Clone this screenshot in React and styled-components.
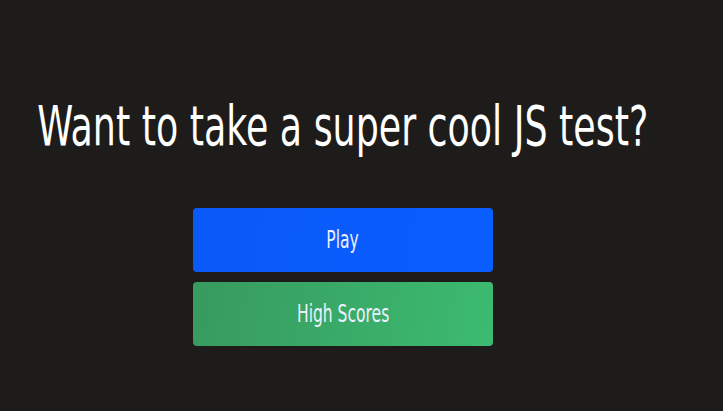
import React from 'react';
import styled, { createGlobalStyle } from 'styled-components';

const GlobalStyle = createGlobalStyle`
  html, body {
    margin: 0;
    padding: 0;
    background: #1d1c1b;
    height: 100%;
  }
  body {
    font-family: "DejaVu Sans Condensed", "Liberation Sans", sans-serif;
    color: #ffffff;
  }
`;

const Page = styled.main`
  width: 723px;
  height: 411px;
  display: flex;
  justify-content: flex-start;
  padding-left: 40px;
  box-sizing: border-box;
`;

const Home = styled.div`
  width: 606px;
  display: flex;
  flex-direction: column;
  align-items: center;
  padding-top: 94px;
`;

const Title = styled.h1`
  margin: 0 0 50px;
  font-size: 55px;
  font-weight: 400;
  line-height: 64px;
  white-space: nowrap;
  transform: scaleX(0.735);
`;

const Button = styled.button`
  width: 300px;
  height: 64px;
  margin-bottom: 10px;
  padding: 0;
  border: none;
  border-radius: 4px;
  font-family: inherit;
  font-size: 24px;
  color: #eef0ff;
  cursor: pointer;
  background: ${(p) =>
    p.$variant === 'green'
      ? 'linear-gradient(100deg, #379a5f 0%, #3cbb71 100%)'
      : 'linear-gradient(100deg, #0a5af8 0%, #0a5dff 100%)'};
`;

const Label = styled.span`
  display: inline-block;
  transform: scaleX(0.72);
`;

export default function App() {
  return (
    <>
      <GlobalStyle />
      <Page>
        <Home>
          <Title>Want to take a super cool JS test?</Title>
          <Button><Label>Play</Label></Button>
          <Button $variant="green"><Label>High Scores</Label></Button>
        </Home>
      </Page>
    </>
  );
}
